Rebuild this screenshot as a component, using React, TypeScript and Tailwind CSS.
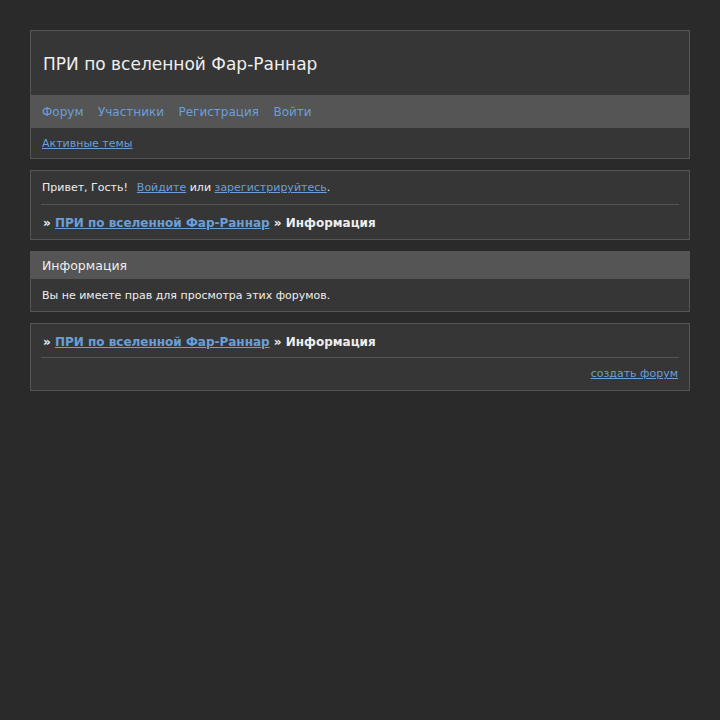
export default function App() {
    return (
        <div className="min-h-[720px] bg-[#2a2a2a] pt-[30px] px-[30px] font-['DejaVu_Sans',sans-serif] text-[#eeeeee]">
            <div className="border border-[#555555] bg-[#363636]">
                <div className="h-[64px] flex items-center pt-[3px] px-3 text-[17px]">ПРИ по вселенной Фар-Раннар</div>
                <div className="h-[33px] bg-[#555555] flex items-center pt-[1px] gap-[14.5px] px-[11px] text-[12px] text-[#6b9fd8]">
                    <a>Форум</a>
                    <a>Участники</a>
                    <a>Регистрация</a>
                    <a>Войти</a>
                </div>
                <div className="h-[30px] flex items-center pt-[3px] px-[11px] text-[11px]">
                    <a className="underline text-[#6b9fd8]">Активные темы</a>
                </div>
            </div>

            <div className="mt-[11px] border border-[#555555] bg-[#363636] px-[10px]">
                <div className="h-[33px] flex items-center pt-[2px] px-px text-[11px]">
                    Привет, Гость!&nbsp;&nbsp;<a className="ml-[2px] underline text-[#6b9fd8]">Войдите</a>&nbsp;или&nbsp;<a className="underline text-[#6b9fd8]">зарегистрируйтесь</a>.
                </div>
                <div className="border-t border-[#555555]"></div>
                <div className="h-[34px] flex items-center pt-[1px] px-[2px] text-[12px] font-bold">
                    »&nbsp;<a className="underline text-[#6b9fd8]">ПРИ по вселенной Фар-Раннар</a>&nbsp;» Информация
                </div>
            </div>

            <div className="mt-[11px] border border-[#555555] bg-[#363636]">
                <div className="h-[27px] bg-[#555555] flex items-center pt-[2px] px-[11px] text-[12.5px]">Информация</div>
                <div className="h-[32px] flex items-center pt-[3px] px-[11px] text-[11px]">Вы не имеете прав для просмотра этих форумов.</div>
            </div>

            <div className="mt-[11px] border border-[#555555] bg-[#363636] px-[10px]">
                <div className="h-[33px] flex items-center pt-[3px] px-[2px] text-[12px] font-bold">
                    »&nbsp;<a className="underline text-[#6b9fd8]">ПРИ по вселенной Фар-Раннар</a>&nbsp;» Информация
                </div>
                <div className="border-t border-[#555555]"></div>
                <div className="h-[32px] flex items-center justify-end pt-[1px] px-px text-[11px]">
                    <a className="underline text-[#6b9fd8]">создать форум</a>
                </div>
            </div>
        </div>
    )
}
